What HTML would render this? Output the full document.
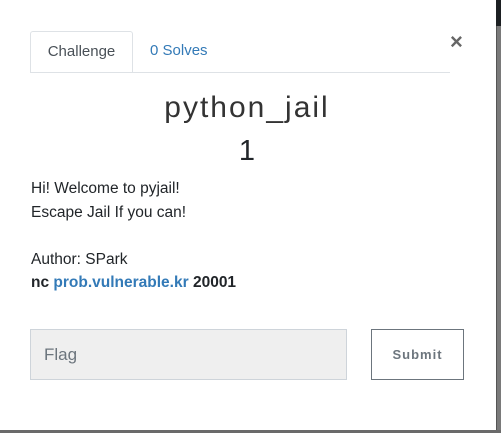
<!DOCTYPE html>
<html><head><style>
body{margin:0;width:501px;height:433px;position:relative;overflow:hidden;background:#fff;font-family:"Liberation Sans",sans-serif;color:#212529}
.rs{position:absolute;left:496px;top:0;width:5px;height:433px;background:#7a7a7a;border-left:1px solid #555}
.rs2{position:absolute;left:496px;top:0;width:6px;height:26px;background:#1c1f22}
.bs{position:absolute;left:0;top:430px;width:501px;height:3px;background:#6a6a6a}
.tab{position:absolute;left:30px;top:31px;width:101px;height:41px;border:1px solid #dee2e6;border-bottom:none;border-radius:3px 3px 0 0;background:#fff;font-size:15px;color:#495057;text-align:center;line-height:40px}
.line{position:absolute;left:30px;top:72px;width:420px;height:1px;background:#dee2e6}
.solves{position:absolute;left:150px;top:31px;line-height:40px;font-size:15px;color:#337ab7}
.x{position:absolute;left:450px;top:29px;font-size:22px;color:#666;font-weight:bold}
.title{position:absolute;left:0;width:494px;text-align:center;top:91px;font-size:30px;letter-spacing:2px;color:#333}
.one{position:absolute;left:0;width:494px;text-align:center;top:135px;font-size:29px;color:#212529}
.txt{position:absolute;left:31px;top:177px;font-size:15.5px;line-height:23.5px;color:#212529}
a{color:#337ab7;font-weight:bold;text-decoration:none}
.inp{position:absolute;left:30px;top:329px;width:317px;height:51px;background:#efefef;border:1px solid #ced4da;box-sizing:border-box;font-size:17px;color:#6c757d;padding-left:13px;line-height:49px}
.btn{position:absolute;left:371px;top:329px;width:93px;height:51px;border:1px solid #6c757d;box-sizing:border-box;text-align:center;line-height:49px;font-size:13px;font-weight:bold;color:#6c757d;letter-spacing:1px}
</style></head><body>
<div class="rs"></div><div class="rs2"></div><div class="bs"></div>
<div class="tab">Challenge</div><div class="line"></div>
<div class="solves">0 Solves</div>
<div class="x">×</div>
<div class="title">python_jail</div>
<div class="one">1</div>
<div class="txt">Hi! Welcome to pyjail!<br>Escape Jail If you can!<br><br>Author: SPark<br><b>nc</b> <a>prob.vulnerable.kr</a> <b>20001</b></div>
<div class="inp">Flag</div>
<div class="btn">Submit</div>
</body></html>
